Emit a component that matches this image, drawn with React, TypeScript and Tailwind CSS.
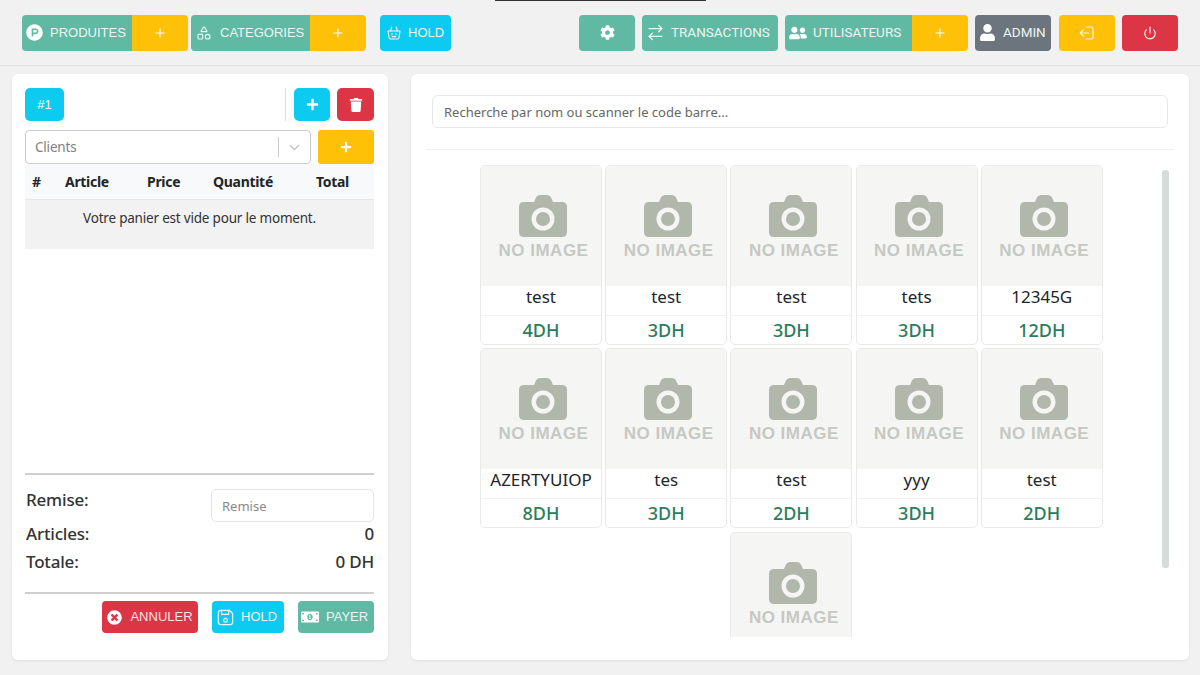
import type { ReactNode } from "react";
import { FaCog, FaMoneyBillAlt, FaPlus, FaProductHunt, FaTimesCircle, FaTrash, FaUser, FaUserFriends } from "react-icons/fa";
import { ArrowRightLeft, ChevronDown, Plus, Power, Shapes } from "lucide-react";

const products = [
  { name: "test", price: "4DH" },
  { name: "test", price: "3DH" },
  { name: "test", price: "3DH" },
  { name: "tets", price: "3DH" },
  { name: "12345G", price: "12DH" },
  { name: "AZERTYUIOP", price: "8DH" },
  { name: "tes", price: "3DH" },
  { name: "test", price: "2DH" },
  { name: "yyy", price: "3DH" },
  { name: "test", price: "2DH" },
];

function BasketIcon() {
  return (
    <svg width="16" height="16" viewBox="0 0 24 24" fill="none" stroke="currentColor" strokeWidth="1.7" strokeLinecap="round" strokeLinejoin="round">
      <path d="M3 9h18l-1.600 10.200a2 2 0 0 1-2 1.800H6.600a2 2 0 0 1-2-1.800z" />
      <path d="M7 9l1.500-6M17 9l-1.500-6" />
      <path d="M9 13v1.500M15 13v1.500M9.500 17.500h5" />
    </svg>
  );
}

function ExitIcon() {
  return (
    <svg width="18" height="18" viewBox="0 0 24 24" fill="none" stroke="currentColor" strokeWidth="1.500" strokeLinecap="round" strokeLinejoin="round">
      <path d="M11 4h7a2 2 0 0 1 2 2v12a2 2 0 0 1-2 2h-7" />
      <path d="M14 12H3M7 8l-4 4 4 4" />
    </svg>
  );
}

function SaveIcon() {
  return (
    <svg width="19" height="19" viewBox="0 0 24 24" fill="none" stroke="currentColor" strokeWidth="1.600" strokeLinecap="round" strokeLinejoin="round">
      <path d="M6 3h11l4 4v11a3 3 0 0 1-3 3H6a3 3 0 0 1-3-3V6a3 3 0 0 1 3-3z" />
      <path d="M7 3v5h9V3" />
      <circle cx="12" cy="15.500" r="2.400" />
    </svg>
  );
}

function NoImage() {
  return (
    <div className="flex flex-col items-center h-[120px] bg-[#f5f6f4] pt-[29px] pl-[5px]">
      <svg width="48" height="42" viewBox="0 0 48 42" className="-ml-[1px]">
        <path d="M5 7h10l2-4.500Q18 0 21 0h7q3 0 4 2.500L34 7h9q5 0 5 5v25q0 5-5 5H5q-5 0-5-5V12q0-5 5-5z" fill="#b1b7ab" />
        <circle cx="24" cy="24" r="11.500" fill="#f5f6f4" />
        <circle cx="24" cy="24" r="7" fill="#b1b7ab" />
      </svg>
      <span className="font-['Liberation_Sans'] font-bold text-[17px] leading-[20px] tracking-[0.5px] mt-[4px] text-[#c6c8c3] whitespace-nowrap">NO IMAGE</span>
    </div>
  );
}

function ProductCard({ name, price }: { name: string; price: string }) {
  return (
    <div className="h-[180px] rounded-[5px] border border-[#e8e9e8] overflow-hidden bg-white">
      <NoImage />
      <div className="h-[30px] flex items-center justify-center pb-[8px] border-b border-[#f1f2f1] text-[17px] text-[#212529] whitespace-nowrap">{name}</div>
      <div className="h-[28px] flex items-center justify-center text-[18px] font-medium text-[#2a7d5c]">{price}</div>
    </div>
  );
}

function TopButton({ className, icon, label, gap = "gap-[8px]" }: { className: string; icon?: ReactNode; label?: string; gap?: string }) {
  return (
    <button className={`h-[36px] flex items-center ${gap} text-[#eaf6f3] uppercase ${className}`}>
      {icon}
      {label && <span>{label}</span>}
    </button>
  );
}

const plusIcon = <Plus size={14} strokeWidth={2} className="text-white" />;

export default function App() {
  return (
    <div className="w-[1200px] h-[675px] overflow-hidden relative flex flex-col bg-[#f1f1f1] font-['Noto_Sans',sans-serif] text-[#212529]">
      <div className="absolute top-0 left-[495px] w-[211px] h-px bg-[#333]" />

      {/* Top bar */}
      <header className="h-[66px] shrink-0 border-b border-[#e3e3e3] flex items-center justify-between pl-[22px] pr-[22px] font-['Liberation_Sans',sans-serif] text-[13px]">
        <div className="flex items-center">
          <TopButton className="w-[110px] rounded-l-[4px] bg-[#60b9a3] pl-[4px]" icon={<FaProductHunt className="text-white text-[17px]" />} label="Produites" gap="gap-[7px]" />
          <TopButton className="w-[56px] rounded-r-[4px] bg-[#ffc107] justify-center" icon={plusIcon} />
          <TopButton className="w-[119px] ml-[3px] rounded-l-[4px] bg-[#60b9a3] pl-[5px]" icon={<Shapes size={16} strokeWidth={1.7} />} label="Categories" />
          <TopButton className="w-[56px] rounded-r-[4px] bg-[#ffc107] justify-center" icon={plusIcon} />
          <TopButton className="w-[71px] ml-[14px] rounded-[4px] bg-[#0dcaf0] pl-[6px]" icon={<BasketIcon />} label="Hold" gap="gap-[6px]" />
        </div>
        <div className="flex items-center font-['Roboto',sans-serif] text-[13.5px]">
          <TopButton className="w-[56px] rounded-[4px] bg-[#60b9a3] justify-center" icon={<FaCog className="text-white text-[15px]" />} />
          <TopButton className="w-[136px] ml-[7px] rounded-[4px] bg-[#60b9a3] pl-[4px]" icon={<ArrowRightLeft size={19} strokeWidth={1.600} />} label="Transactions" gap="gap-[6px]" />
          <TopButton className="w-[127px] ml-[7px] rounded-l-[4px] bg-[#60b9a3] pl-[4px]" icon={<FaUserFriends className="text-white text-[18px]" />} label="Utilisateurs" gap="gap-[6px]" />
          <TopButton className="w-[56px] rounded-r-[4px] bg-[#ffc107] justify-center" icon={plusIcon} />
          <TopButton className="w-[76px] ml-[7px] rounded-[4px] bg-[#6c757d] pl-[4px]" icon={<FaUser className="text-white text-[17px]" />} label="Admin" gap="gap-[7px]" />
          <TopButton className="w-[56px] ml-[8px] rounded-[4px] bg-[#ffc107] justify-center" icon={<ExitIcon />} />
          <TopButton className="w-[56px] ml-[7px] rounded-[4px] bg-[#dc3545] justify-center" icon={<Power size={14} strokeWidth={2} />} />
        </div>
      </header>

      <main className="flex-1 flex pt-[8px] pb-[15px] pl-[12px] pr-[11px] gap-[23px] min-h-0">
        {/* Cart */}
        <section className="w-[376px] shrink-0 bg-white rounded-[6px] shadow-[0_1px_3px_rgba(0,0,0,0.08)] pt-[14px] pl-[13px] pr-[14px] flex flex-col">
          <div className="flex items-stretch h-[33px]">
            <button className="w-[39px] rounded-[5px] bg-[#0dcaf0] text-white text-[13px] font-['Liberation_Sans']">#1</button>
            <div className="w-px bg-[#dcdcdc] ml-auto" />
            <button className="w-[36px] ml-[8px] rounded-[5px] bg-[#0dcaf0] text-white flex items-center justify-center"><FaPlus className="text-[13px]" /></button>
            <button className="w-[37px] ml-[7px] rounded-[5px] bg-[#dc3545] text-white flex items-center justify-center"><FaTrash className="text-[14px]" /></button>
          </div>
          <div className="flex h-[34px] mt-[9px] gap-[7px]">
            <div className="flex-1 rounded-[4px] border border-[#ccc] flex items-center pl-[9px] text-[13.5px] tracking-[-0.2px] text-[#808080]">
              <span className="flex-1">Clients</span>
              <div className="w-px h-[20px] bg-[#ccc]" />
              <ChevronDown size={17} className="mx-[7px] text-[#ccc]" />
            </div>
            <button className="w-[56px] rounded-[3px] bg-[#ffc107] text-white flex items-center justify-center"><FaPlus className="text-[12px]" /></button>
          </div>
          <div className="grid grid-cols-[30px_92px_66px_87px_1fr] items-center h-[35px] pb-[1px] bg-[#f8f9fa] text-[14px] font-bold tracking-[-0.3px] text-[#212529]">
            <span className="pl-[7px]">#</span>
            <span className="pl-[10px]">Article</span>
            <span>Price</span>
            <span>Quantité</span>
            <span className="pl-[16px]">Total</span>
          </div>
          <div className="h-[50px] bg-[#f2f2f2] border-t border-[#e6e6e6] text-center text-[13.5px] tracking-[-0.2px] pt-[8px] text-[#333]">Votre panier est vide pour le moment.</div>

          <div className="mt-auto border-t-2 border-[#cfcfcf]" />
          <div className="flex items-start justify-between mt-[15px] text-[17px] tracking-[-0.2px] font-medium text-[#333]">
            <span className="leading-[22px] ml-[1px] -mt-[1px]">Remise:</span>
            <input placeholder="Remise" className="w-[163px] h-[33px] rounded-[5px] border border-[#e4e6e8] pl-[10px] text-[13px] tracking-normal font-normal placeholder:text-[#888] -mt-[1px]" />
          </div>
          <div className="flex justify-between text-[17px] tracking-[-0.2px] font-medium text-[#333] leading-[22px] mt-[1px]">
            <span className="ml-[1px]">Articles:</span>
            <span>0</span>
          </div>
          <div className="flex justify-between text-[17px] tracking-[-0.2px] font-medium text-[#333] leading-[22px] mt-[6px]">
            <span className="ml-[1px]">Totale:</span>
            <span>0 DH</span>
          </div>
          <div className="border-t-2 border-[#cfcfcf] mt-[19px]" />
          <div className="flex justify-end gap-[14px] mt-[7px] mb-[27px] font-['Liberation_Sans',sans-serif]">
            <button className="w-[96px] h-[32px] rounded-[4px] bg-[#dc3545] text-[#f7e3e5] text-[13px] flex items-center justify-center gap-[8px]"><FaTimesCircle className="text-white text-[15px]" />ANNULER</button>
            <button className="w-[72px] h-[32px] rounded-[4px] bg-[#0dcaf0] text-[#e6f9fd] text-[13px] flex items-center pl-[4px] gap-[6px]"><SaveIcon />HOLD</button>
            <button className="w-[76px] h-[32px] rounded-[4px] bg-[#60b9a3] text-[#eaf6f3] text-[13px] flex items-center pl-[3px] gap-[7px]"><FaMoneyBillAlt className="text-white text-[18px]" />PAYER</button>
          </div>
        </section>

        {/* Products */}
        <section className="flex-1 bg-white rounded-[6px] shadow-[0_1px_3px_rgba(0,0,0,0.08)] flex flex-col min-w-0 pt-[21px]">
          <div className="pl-[21px] pr-[21px]">
            <input placeholder="Recherche par nom ou scanner le code barre..." className="w-full h-[33px] rounded-[6px] border border-[#e6e7e8] pl-[11px] text-[13px] placeholder:text-[#666]" />
          </div>
          <div className="mt-[21px] mx-[15px] border-t border-[#f1f2f1]" />
          <div className="flex mt-[15px] h-[472px] overflow-hidden">
            <div className="ml-[69px] w-[623px] h-[472px] overflow-hidden grid grid-cols-[repeat(5,122px)] content-start gap-x-[3.2px] gap-y-[3.4px]">
              {products.map((p, i) => (
                <ProductCard key={i} name={p.name} price={p.price} />
              ))}
              {/* last card is cut by the scroll area, only its picture shows */}
              <div className="col-start-3 h-[105px] rounded-t-[5px] border-x border-t border-[#e8e9e8] overflow-hidden">
                <NoImage />
              </div>
            </div>
            <div className="ml-[59px] mt-[5px] w-[7px] h-[398px] rounded-[3px] bg-[#d6dcda]" />
          </div>
        </section>
      </main>
    </div>
  );
}
